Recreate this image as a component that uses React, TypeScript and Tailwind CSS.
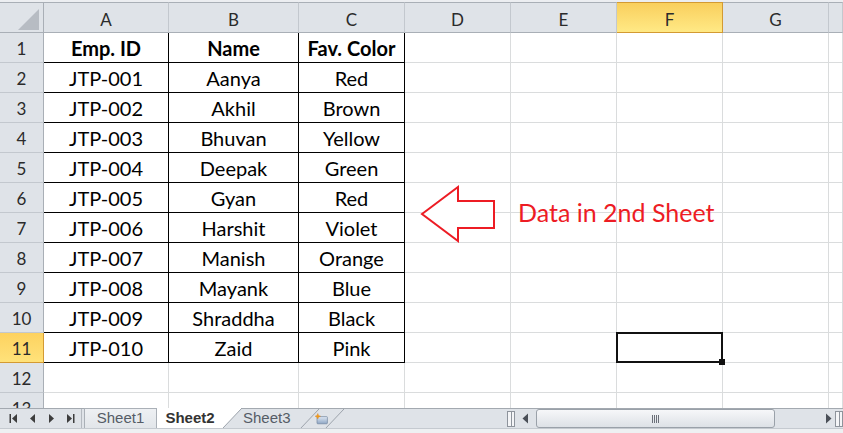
import React from "react";

const cols = ["A", "B", "C", "D", "E", "F", "G", "H"];

const data: string[][] = [
  ["Emp. ID", "Name", "Fav. Color"],
  ["JTP-001", "Aanya", "Red"],
  ["JTP-002", "Akhil", "Brown"],
  ["JTP-003", "Bhuvan", "Yellow"],
  ["JTP-004", "Deepak", "Green"],
  ["JTP-005", "Gyan", "Red"],
  ["JTP-006", "Harshit", "Violet"],
  ["JTP-007", "Manish", "Orange"],
  ["JTP-008", "Mayank", "Blue"],
  ["JTP-009", "Shraddha", "Black"],
  ["JTP-010", "Zaid", "Pink"],
];

const font = { fontFamily: "Lato, 'Noto Sans', sans-serif" };

function NavIcon({ kind }: { kind: "first" | "prev" | "next" | "last" }) {
  return (
    <svg width="9" height="11" viewBox="0 0 9 11" className="text-[#3d3d3d]">
      {kind === "first" && (
        <>
          <rect x="0.5" y="1" width="1.5" height="9" fill="currentColor" />
          <path d="M8 1 L3 5.5 L8 10 Z" fill="currentColor" />
        </>
      )}
      {kind === "prev" && <path d="M7 1 L2 5.5 L7 10 Z" fill="currentColor" />}
      {kind === "next" && <path d="M2 1 L7 5.5 L2 10 Z" fill="currentColor" />}
      {kind === "last" && (
        <>
          <path d="M1 1 L6 5.5 L1 10 Z" fill="currentColor" />
          <rect x="7" y="1" width="1.5" height="9" fill="currentColor" />
        </>
      )}
    </svg>
  );
}

function Slash({ white }: { white?: boolean }) {
  return (
    <svg width="19" height="20" viewBox="0 0 19 20" className="shrink-0">
      {white && <path d="M0 0 L19 0 L0 20 Z" fill="#ffffff" />}
      <path d="M0 20 L19 0" stroke="#9ca3ab" strokeWidth="1" />
    </svg>
  );
}

function Splitter() {
  return (
    <div className="w-[8px] h-[16px] border border-[#8e949c] bg-[#f4f5f7] flex justify-center">
      <div className="w-[1px] h-full bg-[#8e949c]" />
    </div>
  );
}

export default function App() {
  return (
    <div className="relative w-[843px] h-[433px] overflow-hidden bg-white flex flex-col select-none">
      {/* sheet grid */}
      <div className="h-[408px] overflow-hidden">
        <div className="h-[2px] bg-[#eceef1]" />
        <div className="grid grid-cols-[44px_125px_130px_106px_106px_106px_106px_106px_1fr]">
          {/* corner */}
          <div className="h-[31px] border-t border-b border-r border-[#a9afb6] bg-[#dfe3e8] relative">
            <svg width="44" height="31" viewBox="0 0 44 31" className="absolute inset-0">
              <path d="M39 6 L39 27 L18 27 Z" fill="#b7bcc3" />
            </svg>
          </div>
          {cols.map((c) => {
            const sel = c === "F";
            return (
              <div
                key={c}
                style={font}
                className={
                  sel
                    ? "h-[31px] border-t border-b border-r border-[#d39a33] bg-gradient-to-b from-[#f9cf5c] to-[#ffe985] flex items-center justify-center pt-[5px] text-[17px] text-[#2b2b2b]"
                    : "h-[31px] border-t border-b border-r border-t-[#a9afb6] border-b-[#a9afb6] border-r-[#c3c8ce] bg-[#dfe3e8] flex items-center justify-center pt-[5px] text-[17px] text-[#2b2b2b]"
                }
              >
                {c === "H" ? "" : c}
              </div>
            );
          })}
          {Array.from({ length: 13 }).map((_, r) => {
            const rowNum = r + 1;
            const rowSel = rowNum === 11;
            return (
              <React.Fragment key={r}>
                <div
                  style={font}
                  className={
                    rowSel
                      ? "h-[30px] border-b border-r border-[#d39a33] bg-gradient-to-b from-[#fdd25f] to-[#ffe27a] flex items-center justify-center pt-[2px] text-[17px] text-[#2b2b2b]"
                      : "h-[30px] border-b border-r border-b-[#c3c8ce] border-r-[#a9afb6] bg-[#dfe3e8] flex items-center justify-center pt-[2px] text-[17px] text-[#2b2b2b]"
                  }
                >
                  {rowNum}
                </div>
                {cols.map((c, ci) => {
                  const inTable = ci < 3 && r < 11;
                  const text = inTable ? data[r][ci] : "";
                  const isSel = c === "F" && rowNum === 11;
                  return (
                    <div
                      key={c}
                      style={font}
                      className={
                        inTable
                          ? `h-[30px] border-b border-r border-black flex items-center justify-center pt-[1px] text-[20px] text-black ${r === 0 ? "font-bold" : ""}`
                          : `h-[30px] border-b border-r border-[#dadcdd] ${isSel ? "relative z-10" : ""}`
                      }
                    >
                      {text}
                      {isSel && (
                        <div className="absolute left-[-1px] top-[-1px] w-[107px] h-[31px] border-[2px] border-[#111]">
                          <div className="absolute right-[-4px] bottom-[-4px] w-[6px] h-[6px] bg-[#111]" />
                        </div>
                      )}
                    </div>
                  );
                })}
              </React.Fragment>
            );
          })}
        </div>
      </div>

      {/* sheet tabs + horizontal scrollbar */}
      <div
        className="h-[20px] bg-[#dfe3e8] border-t border-[#a3a9b0] flex items-stretch"
        style={{ fontFamily: "'Liberation Sans', Arial, sans-serif" }}
      >
        <div className="w-[82px] flex items-center pl-[9px] gap-[10px] border-r border-[#b4b9c0]">
          <NavIcon kind="first" />
          <NavIcon kind="prev" />
          <NavIcon kind="next" />
          <NavIcon kind="last" />
        </div>
        <div className="ml-[2px] w-[73px] border-l border-r border-t border-[#aab0b7] bg-gradient-to-b from-[#eef0f3] to-[#e2e6ea] flex items-center justify-center text-[15px] text-[#555c66] -mt-[1px]">
          Sheet1
        </div>
        <div className="w-[66px] bg-white flex items-center justify-center text-[15px] font-bold text-[#333] -mt-[1px]">
          Sheet2
        </div>
        <div className="-mt-[1px] flex">
          <Slash white />
        </div>
        <div className="w-[58px] flex items-center pl-[1px] text-[15px] text-[#555c66]">Sheet3</div>
        <Slash />
        <div className="w-[16px] flex items-center justify-center -ml-[6px] mr-[-4px]">
          <svg width="20" height="16" viewBox="0 0 20 16">
            <defs>
              <linearGradient id="ins" x1="0" y1="0" x2="0" y2="1">
                <stop offset="0" stopColor="#dfe8f3" />
                <stop offset="1" stopColor="#8ea6c4" />
              </linearGradient>
            </defs>
            <rect x="5" y="5" width="13" height="9" rx="1" fill="url(#ins)" stroke="#6b7f99" strokeWidth="0.8" />
            <path d="M5 3.5 L6 1 L7 3.5 L9.5 4.5 L7 5.5 L6 8 L5 5.5 L2.5 4.5 Z" fill="#f39c12" stroke="#d9730d" strokeWidth="0.4" />
          </svg>
        </div>
        <Slash />
        <div className="flex-1" />
        <div className="w-[338px] flex items-center">
          <div className="ml-[2px]">
            <Splitter />
          </div>
          <div className="ml-[6px] w-[9px] flex justify-center">
            <svg width="7" height="11" viewBox="0 0 7 11">
              <path d="M6 0.5 L0.5 5.5 L6 10.5 Z" fill="#4a4f57" />
            </svg>
          </div>
          <div className="ml-[6px] w-[239px] h-[19px] rounded-[3px] border border-[#9aa1a9] bg-gradient-to-b from-[#f6f7f9] to-[#dde1e6] flex items-center justify-center">
            <svg width="8" height="8" viewBox="0 0 8 8">
              <path d="M0.5 0 V8 M2.5 0 V8 M4.5 0 V8 M6.5 0 V8" stroke="#6b7079" strokeWidth="1" />
            </svg>
          </div>
          <div className="flex-1 flex justify-end pr-[3px]">
            <svg width="7" height="11" viewBox="0 0 7 11">
              <path d="M1 0.5 L6.5 5.5 L1 10.5 Z" fill="#4a4f57" />
            </svg>
          </div>
          <div className="mr-[0px]">
            <Splitter />
          </div>
        </div>
      </div>
      <div className="h-[5px] bg-[#eef0f2] border-t border-[#c5cad0]" />

      {/* callout arrow */}
      <svg
        className="absolute left-0 top-0 pointer-events-none"
        width="843"
        height="433"
        viewBox="0 0 843 433"
      >
        <path
          d="M422 214 L458 187 L458 201 L494 201 L494 228 L458 228 L458 241 Z"
          fill="#ffffff"
          stroke="#ed1c24"
          strokeWidth="2"
        />
      </svg>
      <div
        className="absolute left-[518px] top-[197px] text-[25px] leading-[30px] text-[#ed1c24] whitespace-nowrap"
        style={font}
      >
        Data in 2nd Sheet
      </div>
    </div>
  );
}
